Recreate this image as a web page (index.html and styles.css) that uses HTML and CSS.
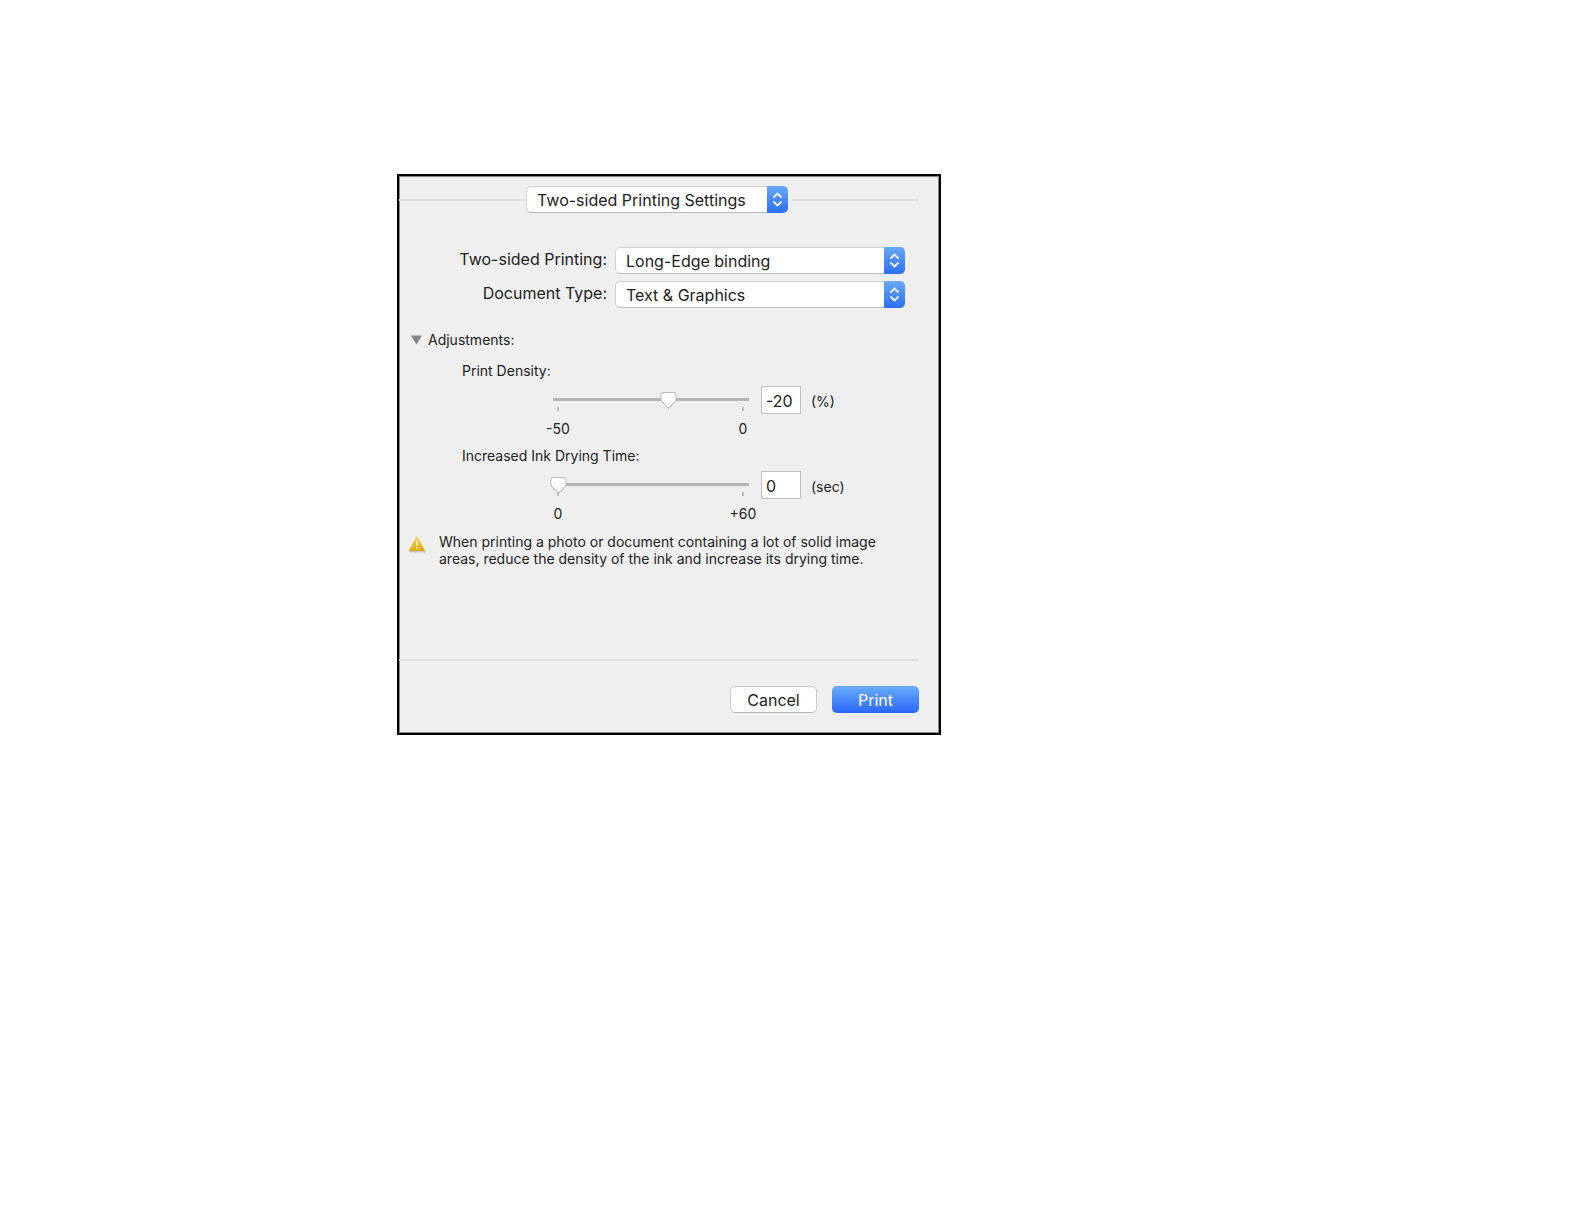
FILE: index.html
```
<!DOCTYPE html>
<html lang="en">
<head>
    <meta charset="UTF-8">
    <meta name="viewport" content="width=device-width, initial-scale=1.0">
    <title>Print</title>
    <link rel="stylesheet" href="styles.css">
</head>
<body>
    <form class="dialog">
        <div class="pane-picker">
            <div class="popup">
                <select aria-label="Settings pane">
                    <option>Two-sided Printing Settings</option>
                </select>
                <svg class="popup-arrows" viewBox="0 0 21 27"><path d="M7 11l3.5-3.5L14 11M7 16l3.5 3.5L14 16"/></svg>
            </div>
        </div>

        <div class="options">
            <label for="binding">Two-sided Printing:</label>
            <div class="popup">
                <select id="binding">
                    <option>Long-Edge binding</option>
                </select>
                <svg class="popup-arrows" viewBox="0 0 21 27"><path d="M7 11l3.5-3.5L14 11M7 16l3.5 3.5L14 16"/></svg>
            </div>
            <label for="docType">Document Type:</label>
            <div class="popup">
                <select id="docType">
                    <option>Text &amp; Graphics</option>
                </select>
                <svg class="popup-arrows" viewBox="0 0 21 27"><path d="M7 11l3.5-3.5L14 11M7 16l3.5 3.5L14 16"/></svg>
            </div>
        </div>

        <!-- Adjustments -->
        <details class="adjustments" open>
            <summary>
                <svg class="triangle" viewBox="0 0 12 10"><path d="M0 0h12L6 10z"/></svg>
                Adjustments:
            </summary>
            <div class="adjustment">
                <label for="density">Print Density:</label>
                <div class="slider-row">
                    <div class="slider">
                        <input type="range" id="density" min="-50" max="0" value="-20">
                        <div class="scale"><span>-50</span><span>0</span></div>
                    </div>
                    <input type="text" class="value" id="densityValue" value="-20" aria-label="Print density value">
                    <label class="unit" for="densityValue">(%)</label>
                </div>
            </div>
            <div class="adjustment">
                <label for="drying">Increased Ink Drying Time:</label>
                <div class="slider-row">
                    <div class="slider">
                        <input type="range" id="drying" min="0" max="60" value="0">
                        <div class="scale"><span>0</span><span>+60</span></div>
                    </div>
                    <input type="text" class="value" id="dryingValue" value="0" aria-label="Drying time value">
                    <label class="unit" for="dryingValue">(sec)</label>
                </div>
            </div>
        </details>

        <div class="notice">
            <svg class="warning" viewBox="0 0 18 18">
                <defs>
                    <linearGradient id="amber" x1="0" y1="0" x2="0" y2="1">
                        <stop offset="0" stop-color="#f3d565"/>
                        <stop offset="1" stop-color="#dca90c"/>
                    </linearGradient>
                </defs>
                <path d="M1 15.5h16v2H1z" fill="#c9c5b8"/>
                <path d="M9 1.5L16.5 15.5h-15z" fill="url(#amber)" stroke="url(#amber)" stroke-linejoin="round"/>
                <path d="M8 6h2l-.4 5H8.400zM8.200 12h1.600v1.700H8.200z" fill="#fff4cf"/>
            </svg>
            <p>When printing a photo or document containing a lot of solid image areas, reduce the density of the ink and increase its drying time.</p>
        </div>

        <div class="actions">
            <button type="button">Cancel</button>
            <button type="submit" class="primary">Print</button>
        </div>
    </form>
</body>
</html>
```
FILE: styles.css
```
* {
    box-sizing: border-box;
}

body {
    margin: 0;
    padding: 174px 24px 24px 397px;
    background-color: #fff;
    color: #222;
    font-family: Inter, "Liberation Sans", sans-serif;
    font-size: 14px;
    line-height: 18px;
}

select, input, button {
    margin: 0;
    color: inherit;
    font-family: inherit;
    font-size: 16px;
}

.dialog {
    max-width: 544px;
    padding: 10px 20px 20px 0;
    border: 2px solid #000;
    box-shadow: inset 0 0 0 1px #858585;
    background-color: #efefef;
}

/* Pane picker with a rule on both sides */
.pane-picker {
    display: flex;
    align-items: center;
}

.pane-picker::before,
.pane-picker::after {
    content: "";
    flex: 1;
    height: 2px;
    background-color: #dfdfdf;
}

.pane-picker::after {
    margin-left: 4px;
}

.pane-picker .popup {
    width: 262px;
}

/* Pop-up menus */
.popup {
    position: relative;
    height: 27px;
}

.popup select {
    display: block;
    width: 100%;
    height: 27px;
    padding: 0 24px 0 10px;
    border: 1px solid #d0d0d0;
    border-bottom-color: #b8b8b8;
    border-radius: 5px;
    background-color: #fff;
    appearance: none;
}

.popup-arrows {
    position: absolute;
    top: 0;
    right: 0;
    width: 21px;
    height: 27px;
    border-radius: 0 5px 5px 0;
    background: linear-gradient(#67a9f7, #2d6ff6);
    fill: none;
    stroke: #e4efff;
    stroke-width: 2;
    stroke-linecap: round;
    stroke-linejoin: round;
    pointer-events: none;
}

.options {
    display: grid;
    grid-template-columns: 1fr 290px;
    gap: 7px 8px;
    margin: 34px 14px 0 0;
    font-size: 16px;
    line-height: 25px;
    text-align: right;
}

/* Adjustments */
.adjustments {
    margin: 23px 0 0 12px;
}

.adjustments summary {
    display: flex;
    align-items: center;
    gap: 6px;
    list-style: none;
}

.triangle {
    width: 11px;
    height: 10px;
    fill: #858585;
}

.adjustment {
    margin: 13px 0 0 51px;
}

.adjustment + .adjustment {
    margin-top: 9px;
}

.adjustment > label {
    display: block;
}

.slider-row {
    display: flex;
    align-items: flex-start;
    gap: 10px;
    margin: 6px 0 0 88px;
}

.slider {
    width: 201px;
    padding-top: 6px;
}

.slider input {
    display: block;
    width: 100%;
    height: 17px;
    background: linear-gradient(#b4b4b4, #b4b4b4) center 6px / 196px 3px no-repeat;
    appearance: none;
}

.slider input::-webkit-slider-thumb {
    width: 17px;
    height: 17px;
    background: url("data:image/svg+xml,%3Csvg xmlns='http://www.w3.org/2000/svg' viewBox='0 0 17 17'%3E%3Cpath d='M3 .5h11q2 0 2 2V8q0 1-1 2l-6.500 6.500L2 10Q1 9 1 8V2.500Q1 .5 3 .5z' fill='%23fff' stroke='%23b9b9b9'/%3E%3C/svg%3E") no-repeat;
    appearance: none;
}

.scale {
    display: flex;
    justify-content: space-between;
    margin: -2px -12px 0;
}

.scale span {
    width: 40px;
    text-align: center;
}

.scale span::before {
    content: "";
    display: block;
    width: 2px;
    height: 4px;
    margin: 0 auto 9px;
    background-color: #bdbdbd;
}

.value {
    width: 40px;
    height: 28px;
    padding: 2px 4px 0;
    border: 1px solid #c0c0c0;
    background-color: #fff;
}

.unit {
    line-height: 32px;
}

.notice {
    display: flex;
    gap: 13px;
    margin: 10px 0 0 9px;
    line-height: 17px;
}

.notice p {
    max-width: 450px;
    margin: 0;
}

.warning {
    flex: none;
    width: 18px;
    height: 18px;
    margin-top: 2px;
}

.actions {
    display: flex;
    justify-content: flex-end;
    gap: 15px;
    margin-top: 92px;
    padding-top: 25px;
    border-top: 2px solid #dfdfdf;
}

.actions button {
    width: 87px;
    height: 27px;
    padding: 0;
    border: 1px solid #cbcbcb;
    border-bottom-color: #b4b4b4;
    border-radius: 5px;
    background-color: #fff;
}

.actions .primary {
    border: none;
    background: linear-gradient(#68adfa, #2b66fb);
    color: #fff;
}
```
